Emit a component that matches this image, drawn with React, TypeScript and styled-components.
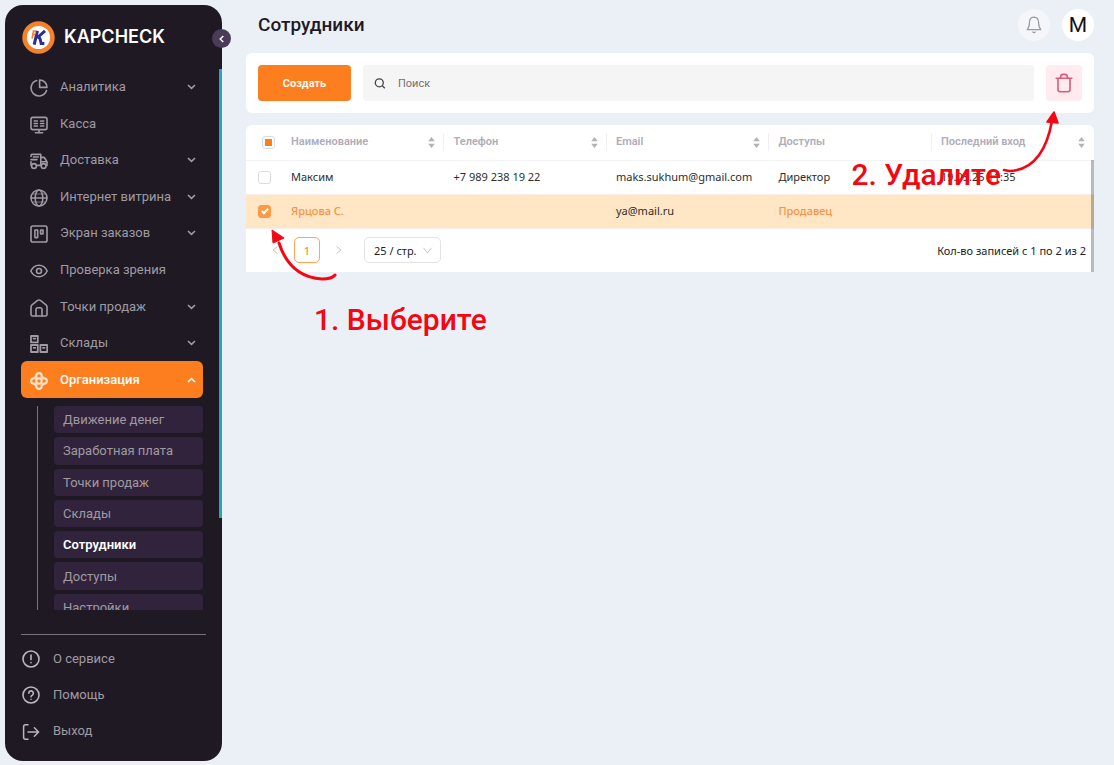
import React from 'react';
import styled, { createGlobalStyle, css } from 'styled-components';

const GlobalStyle = createGlobalStyle`
  *, *::before, *::after { box-sizing: border-box; }
  body { margin: 0; background: #ebf0f7; font-family: Roboto, sans-serif; color: #1f1924; }
  button, input, select { font-family: inherit; margin: 0; }
  button { cursor: pointer; border: 0; padding: 0; background: none; }
  ul { list-style: none; margin: 0; padding: 0; }
  a { text-decoration: none; color: inherit; }
`;

const uiFont = css`font-family: 'Noto Sans', 'Open Sans', sans-serif;`;

const Shell = styled.div`
  display: flex;
  min-height: 100vh;
  padding: 5px 20px 4px 5px;
  gap: 24px;
`;

/* ---------- sidebar ---------- */

const Sidebar = styled.aside`
  position: relative;
  display: flex;
  flex-direction: column;
  flex: 0 0 217px;
  height: calc(100vh - 9px);
  background: #1f1924;
  border-radius: 18px;
`;

const Brand = styled.a`
  display: flex;
  align-items: center;
  gap: 9px;
  height: 64px;
  padding-left: 17px;
  color: #fff;
  font: 600 18px/24px Inter, sans-serif;
`;

const CollapseButton = styled.button`
  position: absolute;
  top: 24px;
  right: -9px;
  width: 19px;
  height: 19px;
  border-radius: 50%;
  background: #4a3b57;
  color: #fff;
  display: grid;
  place-items: center;
`;

const NavScroll = styled.div`
  display: flex;
  flex: 1 1 0;
  min-height: 0;
  overflow: hidden;
`;

const Nav = styled.nav`
  flex: 1;
  padding: 0 16px;
`;

const ScrollTrack = styled.div`
  flex: 0 0 3px;
`;

const ScrollThumb = styled.div`
  height: 83%;
  background: #2ba3b8;
`;

const NavList = styled.ul`
  display: grid;
  grid-auto-rows: 1fr;
  height: 329px;
`;

const NavLink = styled.a<{ $active?: boolean }>`
  display: flex;
  align-items: center;
  height: 100%;
  padding: 0 7px 0 9px;
  border-radius: 6px;
  font-size: 13px;
  line-height: 18px;
  color: ${p => (p.$active ? '#fff' : '#9f9ba2')};
  font-weight: ${p => (p.$active ? 500 : 400)};
  background: ${p => (p.$active ? '#fd7e1f' : 'transparent')};
  & > svg:first-child { margin: 2px 12px 0 0; ${p => p.$active && 'color: #ffe3cc;'} }
  & > span { flex: 1; }
`;

const SubList = styled.ul`
  display: grid;
  grid-auto-rows: 1fr;
  gap: 4px;
  height: 215px;
  margin: 8px 0 0 16px;
  padding-left: 16px;
  border-left: 1px solid #77727b;
`;

const SubLink = styled.a<{ $active?: boolean }>`
  display: flex;
  align-items: center;
  height: 100%;
  padding-left: 9px;
  border-radius: 4px;
  background: #31233c;
  font-size: 13px;
  color: ${p => (p.$active ? '#fff' : '#9f9ba2')};
  font-weight: ${p => (p.$active ? 600 : 400)};
`;

const FooterNav = styled.nav`
  margin: 24px 16px 12px 16px;
  padding-top: 5px;
  border-top: 1px solid #77727b;
`;

const FooterList = styled.ul`
  display: grid;
  grid-auto-rows: 1fr;
  height: 109px;
`;

const FooterLink = styled.a`
  display: flex;
  align-items: center;
  gap: 13px;
  height: 100%;
  padding-left: 1px;
  font-size: 13px;
  color: #9f9ba2;
  & > svg { margin-top: 2px; color: #b9b7bc; }
`;

/* ---------- main ---------- */

const Main = styled.main`
  position: relative;
  flex: 1;
  min-width: 0;
  padding-top: 4px;
`;

const TopBar = styled.header`
  display: flex;
  align-items: center;
  gap: 12px;
  height: 32px;
  margin-bottom: 12px;
  padding-left: 12px;
`;

const Title = styled.h1`
  flex: 1;
  margin: 0;
  font-size: 19px;
  line-height: 24px;
  font-weight: 500;
`;

const RoundButton = styled.button<{ $solid?: boolean }>`
  display: grid;
  place-items: center;
  width: 32px;
  height: 32px;
  border-radius: 50%;
  background: ${p => (p.$solid ? '#fff' : '#f5f6f9')};
  color: ${p => (p.$solid ? '#111' : '#9a98a3')};
  font-size: 21px;
  line-height: 24px;
`;

const Toolbar = styled.section`
  display: flex;
  gap: 12px;
  padding: 12px;
  margin-bottom: 12px;
  background: #fff;
  border-radius: 6px;
`;

const CreateButton = styled.button`
  flex: 0 0 93px;
  height: 36px;
  border-radius: 4px;
  background: #fd7e1f;
  color: #fff;
  font-size: 11px;
  font-weight: 600;
`;

const SearchBox = styled.label`
  display: flex;
  align-items: center;
  flex: 1;
  gap: 12px;
  padding: 0 11px;
  border-radius: 4px;
  background: #f5f5f5;
  color: #444;
`;

const SearchInput = styled.input`
  flex: 1;
  min-width: 0;
  border: 0;
  outline: 0;
  padding: 0;
  background: transparent;
  font-size: 11px;
  &::placeholder { color: #707070; opacity: 1; }
`;

const DeleteButton = styled.button`
  display: grid;
  place-items: center;
  width: 36px;
  height: 36px;
  border-radius: 4px;
  background: #ffebf0;
  color: #dd5a78;
`;

const TableCard = styled.section`
  position: relative;
  background: #fff;
  border-radius: 6px 6px 0 0;
`;

const TableScrollbar = styled.div`
  position: absolute;
  top: 35px;
  right: 0;
  bottom: 0;
  width: 3px;
  background: rgba(0, 0, 0, 0.27);
`;

const Table = styled.table`
  width: 100%;
  table-layout: fixed;
  border-collapse: collapse;
`;

const HeadCell = styled.th<{ $check?: boolean; $last?: boolean }>`
  width: ${p => (p.$check ? '36px' : p.$last ? 'auto' : '19.16%')};
  height: 35px;
  padding: ${p => (p.$check ? '0 0 0 16px' : '0 9px')};
  border-bottom: 1px solid #f3f3f5;
  color: #b0adba;
  font-size: 11px;
  font-weight: 600;
  line-height: 16px;
  text-align: left;
`;

const HeadContent = styled.div<{ $divided?: boolean }>`
  display: flex;
  align-items: center;
  justify-content: space-between;
  height: 18px;
  margin-right: -9px;
  padding-right: 8px;
  border-right: 1px solid ${p => (p.$divided ? '#f0f0f2' : 'transparent')};
`;

const SortButton = styled.button`
  display: grid;
  color: #b3b3b7;
`;

const Row = styled.tr<{ $selected?: boolean }>`
  background: ${p => (p.$selected ? '#ffe6c5' : '#fff')};
`;

const Cell = styled.td<{ $check?: boolean; $accent?: boolean }>`
  ${uiFont}
  height: 34px;
  padding: ${p => (p.$check ? '0 0 0 12px' : '0 9px')};
  border-bottom: 1px solid #f7efe8;
  font-size: 11px;
  line-height: 16px;
  white-space: nowrap;
  color: ${p => (p.$accent ? '#fb9243' : '#2d2d2d')};
  font-weight: ${p => (p.$accent ? 500 : 400)};
`;

const Checkbox = styled.input`
  appearance: none;
  display: grid;
  place-items: center;
  width: 13px;
  height: 13px;
  margin: 0;
  border: 1px solid #dcdce0;
  border-radius: 3px;
  background: #fff;
  &:indeterminate::after {
    content: '';
    width: 7px;
    height: 7px;
    background: #fb7d1c;
  }
  &:checked {
    border-color: #fd9a48;
    background: #fd9a48;
  }
  &:checked::after {
    content: '';
    width: 4px;
    height: 7px;
    margin-bottom: 2px;
    border: solid #fff;
    border-width: 0 2px 2px 0;
    transform: rotate(45deg);
  }
`;

const Pagination = styled.footer`
  ${uiFont}
  display: flex;
  align-items: center;
  height: 43px;
  padding: 0 8px 0 22px;
  font-size: 11px;
  color: #222;
`;

const PageArrow = styled.button`
  display: grid;
  place-items: center;
  width: 14px;
  height: 26px;
  color: #c4c4c8;
`;

const PageNumber = styled.button`
  width: 26px;
  height: 26px;
  margin: 0 12px;
  border: 1px solid #fda35c;
  border-radius: 5px;
  color: #fb8f3e;
  font-size: 11px;
  font-weight: 500;
`;

const SizePicker = styled.label`
  display: grid;
  align-items: center;
  width: 77px;
  height: 26px;
  margin-left: 18px;
  & > * { grid-area: 1 / 1; }
  & > svg { justify-self: end; margin-right: 9px; color: #c4c4c8; pointer-events: none; }
`;

const SizeSelect = styled.select`
  appearance: none;
  width: 100%;
  height: 26px;
  padding: 0 0 0 9px;
  border: 1px solid #e3e3e6;
  border-radius: 5px;
  background: #fff;
  color: #222;
  font-size: 11px;
`;

const Total = styled.span`
  margin-left: auto;
`;

/* ---------- handwritten hints ---------- */

const Hint = styled.p<{ $side: 'left' | 'right' }>`
  position: absolute;
  margin: 0;
  color: #f40612;
  font: 500 30px/40px Roboto, sans-serif;
  white-space: nowrap;
  pointer-events: none;
  ${p => (p.$side === 'left' ? 'left: 68px; top: 295px;' : 'right: 93px; top: 150px;')}
`;

const HintArrow = styled.svg<{ $side: 'left' | 'right' }>`
  position: absolute;
  pointer-events: none;
  fill: none;
  stroke: #f40612;
  ${p => (p.$side === 'left' ? 'left: 24px; top: 224px;' : 'right: 32px; top: 100px;')}
`;

/* ---------- icons ---------- */

const Icon = ({ size = 18, sw = 1.6, children }: { size?: number; sw?: number; children: React.ReactNode }) => (
  <svg width={size} height={size} viewBox="0 0 18 18" fill="none" stroke="currentColor" strokeWidth={sw}
    strokeLinecap="round" strokeLinejoin="round" aria-hidden="true">{children}</svg>
);

const icons = {
  pie: <Icon><path d="M6.6 1.6A7.9 7.9 0 1 0 16.5 11.6" /><path d="M9.6 1A7.4 7.4 0 0 1 17 8.4H9.6Z" /></Icon>,
  till: <Icon><rect x="1" y="1.4" width="16" height="12.2" rx="1.8" /><path d="M9 13.8v2.8M5.4 16.8h7.2M4.2 5h3.2M4.2 7.5h3.2M4.2 10h3.2M10.6 5h3.2M10.6 7.5h3.2M10.6 10h3.2" /></Icon>,
  truck: <Icon><path d="M1 4.4V3.4Q1 2.4 2 2.4H10.8V13.4H7.4M3.4 5h5M1 7.6h6M1 9.8v3.4M10.8 5.4h2.8Q14.2 5.4 14.6 6L17 9.8V13.6M11 9.8h5.8" /><circle cx="4" cy="14" r="2.4" /><circle cx="13.6" cy="14" r="2.4" /></Icon>,
  globe: <Icon sw={1.5}><circle cx="9" cy="9" r="8" /><ellipse cx="9" cy="9" rx="3.8" ry="8" /><path d="M1 9h16" /><path d="M2.6 5h12.8M2.6 13h12.8" strokeWidth=".7" /></Icon>,
  board: <Icon><rect x="1" y="1" width="16" height="16" rx="1.8" /><rect x="4.9" y="5" width="2.8" height="7.6" rx=".3" /><rect x="10.6" y="5" width="2.4" height="4" rx=".3" /></Icon>,
  eye: <Icon><path d="M.8 9C4.6 1.4 13.4 1.4 17.2 9C13.4 16.6 4.6 16.6.8 9Z" /><circle cx="9" cy="9" r="2.5" /></Icon>,
  home: <Icon><path d="M1 8Q1 6.6 2 5.8L7.6 1.4Q9 .6 10.4 1.4L16 5.8Q17 6.6 17 8V15.4Q17 17 15.4 17H2.6Q1 17 1 15.4Z" /><path d="M6 17V10.6Q6 8.8 7.8 8.8h2.4Q12 8.8 12 10.6V17" /></Icon>,
  boxes: <Icon sw={1.8}><rect x="1" y="1" width="6.8" height="6.4" /><rect x="1" y="10" width="6.8" height="7" /><rect x="10.4" y="10" width="6.8" height="7" /><path d="M3.6 3.6h1.6M3.6 12.8h1.6M13 12.8h1.6" /></Icon>,
  org: <Icon sw={2.2}><path d="M6.4 4.2Q6 1.2 9 1.2Q12 1.2 11.6 4.2L13.8 6.4Q16.8 6 16.8 9Q16.8 12 13.8 11.6L11.6 13.8Q12 16.8 9 16.8Q6 16.8 6.4 13.8L4.2 11.6Q1.2 12 1.2 9Q1.2 6 4.2 6.4Z" /><rect x="6.4" y="6.4" width="5.2" height="5.2" rx="1.6" /></Icon>,
  info: <Icon><circle cx="9" cy="9" r="8" /><path d="M9 5v4.6M9 12.6v.2" /></Icon>,
  help: <Icon><circle cx="9" cy="9" r="8" /><path d="M6.8 7.2a2.3 2.3 0 1 1 3.6 1.9Q9 9.8 9 10.8M9 13.2v.1" /></Icon>,
  exit: <Icon sw={1.5}><path d="M6 1.8H3.6Q1.6 1.8 1.6 3.8v10.4q0 2 2 2H6M6 9h10.6M12.4 4.8L16.6 9L12.4 13.2" /></Icon>,
};

const Chevron = ({ up }: { up?: boolean }) => (
  <svg width="9" height="6" viewBox="0 0 9 6" fill="none" stroke="currentColor" strokeWidth="1.6" aria-hidden="true">
    <path d={up ? 'M1 5L4.5 1.6L8 5' : 'M1 1L4.5 4.4L8 1'} />
  </svg>
);

const Logo = () => (
  <svg width="33" height="33" viewBox="0 0 33 33" aria-hidden="true">
    <circle cx="16.5" cy="16.5" r="16.2" fill="#f5812a" />
    <circle cx="16.5" cy="16.5" r="11.6" fill="#fff" />
    <path d="M15.4 9.8L12.2 23.6M23 9.8L15 17M17 15.8Q18.4 18 19.2 22.4H22.4" fill="none" stroke="#2b2e96" strokeWidth="3" />
    <path d="M10 17.6L11.4 10H13.2Q14.4 13.4 11.2 14" fill="none" stroke="#f5812a" strokeWidth="1.5" />
  </svg>
);

const SortIcon = () => (
  <svg width="7" height="11" viewBox="0 0 7 11" fill="currentColor" aria-hidden="true">
    <path d="M3.5 0L6.8 4.2H.2ZM3.5 11L6.8 6.8H.2Z" />
  </svg>
);

/* ---------- data ---------- */

const navItems: { label: string; icon: keyof typeof icons; sub?: boolean; active?: boolean }[] = [
  { label: 'Аналитика', icon: 'pie', sub: true },
  { label: 'Касса', icon: 'till' },
  { label: 'Доставка', icon: 'truck', sub: true },
  { label: 'Интернет витрина', icon: 'globe', sub: true },
  { label: 'Экран заказов', icon: 'board', sub: true },
  { label: 'Проверка зрения', icon: 'eye' },
  { label: 'Точки продаж', icon: 'home', sub: true },
  { label: 'Склады', icon: 'boxes', sub: true },
  { label: 'Организация', icon: 'org', sub: true, active: true },
];

const subItems = ['Движение денег', 'Заработная плата', 'Точки продаж', 'Склады', 'Сотрудники', 'Доступы', 'Настройки'];

const footerItems: { label: string; icon: keyof typeof icons }[] = [
  { label: 'О сервисе', icon: 'info' },
  { label: 'Помощь', icon: 'help' },
  { label: 'Выход', icon: 'exit' },
];

const columns = [
  { label: 'Наименование', sortable: true },
  { label: 'Телефон', sortable: true },
  { label: 'Email', sortable: true },
  { label: 'Доступы', sortable: false },
  { label: 'Последний вход', sortable: true },
];

const employees = [
  { name: 'Максим', phone: '+7 989 238 19 22', email: 'maks.sukhum@gmail.com', role: 'Директор', last: '19.05.25 11:35', selected: false },
  { name: 'Ярцова С.', phone: '', email: 'ya@mail.ru', role: 'Продавец', last: '', selected: true },
];

export default function App() {
  return (
    <>
      <GlobalStyle />
      <Shell>
        <Sidebar>
          <Brand href="#"><Logo />KAPCHECK</Brand>
          <CollapseButton aria-label="Свернуть меню">
            <svg width="5" height="8" viewBox="0 0 5 8" fill="none" stroke="currentColor" strokeWidth="1.4"><path d="M4.3 1L1.2 4L4.3 7" /></svg>
          </CollapseButton>
          <NavScroll>
            <Nav>
              <NavList>
                {navItems.map(item => (
                  <li key={item.label}>
                    <NavLink href="#" $active={item.active}>
                      {icons[item.icon]}
                      <span>{item.label}</span>
                      {item.sub && <Chevron up={item.active} />}
                    </NavLink>
                  </li>
                ))}
              </NavList>
              <SubList>
                {subItems.map(label => (
                  <li key={label}><SubLink href="#" $active={label === 'Сотрудники'}>{label}</SubLink></li>
                ))}
              </SubList>
            </Nav>
            <ScrollTrack><ScrollThumb /></ScrollTrack>
          </NavScroll>
          <FooterNav>
            <FooterList>
              {footerItems.map(item => (
                <li key={item.label}><FooterLink href="#">{icons[item.icon]}{item.label}</FooterLink></li>
              ))}
            </FooterList>
          </FooterNav>
        </Sidebar>

        <Main>
          <TopBar>
            <Title>Сотрудники</Title>
            <RoundButton aria-label="Уведомления">
              <svg width="18" height="18" viewBox="0 0 18 18" fill="none" stroke="currentColor" strokeWidth="1.2" strokeLinecap="round" strokeLinejoin="round">
                <path d="M2.2 13.6Q4.4 11.4 4.4 6.6Q4.6 1.4 9 1.2Q13.4 1.4 13.6 6.6Q13.6 11.4 15.8 13.6ZM7.8 16L9 16.8L10.2 16" />
              </svg>
            </RoundButton>
            <RoundButton $solid aria-label="Профиль">M</RoundButton>
          </TopBar>

          <Toolbar>
            <CreateButton>Создать</CreateButton>
            <SearchBox>
              <svg width="12" height="12" viewBox="0 0 12 12" fill="none" stroke="currentColor" strokeWidth="1.3" aria-hidden="true"><circle cx="5.3" cy="5.8" r="4" /><path d="M8.3 8.8L10.8 11.2" /></svg>
              <SearchInput type="search" placeholder="Поиск" aria-label="Поиск" />
            </SearchBox>
            <DeleteButton aria-label="Удалить">
              <svg width="18" height="20" viewBox="0 0 18 20" fill="none" stroke="currentColor" strokeWidth="1.6" strokeLinecap="round" strokeLinejoin="round">
                <path d="M1.2 5.2H16.8M3 5.4V16.6Q3 18.8 5.2 18.8h7.6Q15 18.8 15 16.6V5.4M5.4 5Q5.6 1.4 8 1.4h2Q12.4 1.4 12.6 5" />
              </svg>
            </DeleteButton>
          </Toolbar>

          <TableCard>
            <Table>
              <thead>
                <tr>
                  <HeadCell $check>
                    <Checkbox type="checkbox" aria-label="Выбрать все" ref={el => { if (el) el.indeterminate = true; }} />
                  </HeadCell>
                  {columns.map((c, i) => (
                    <HeadCell key={c.label} $last={i === columns.length - 1}>
                      <HeadContent $divided={i < columns.length - 1}>
                        {c.label}
                        {c.sortable && <SortButton aria-label={`Сортировать: ${c.label}`}><SortIcon /></SortButton>}
                      </HeadContent>
                    </HeadCell>
                  ))}
                </tr>
              </thead>
              <tbody>
                {employees.map(e => (
                  <Row key={e.name} $selected={e.selected}>
                    <Cell $check><Checkbox type="checkbox" aria-label={e.name} defaultChecked={e.selected} /></Cell>
                    <Cell $accent={e.selected}>{e.name}</Cell>
                    <Cell>{e.phone}</Cell>
                    <Cell>{e.email}</Cell>
                    <Cell $accent={e.selected}>{e.role}</Cell>
                    <Cell>{e.last}</Cell>
                  </Row>
                ))}
              </tbody>
            </Table>
            <Pagination>
              <PageArrow aria-label="Назад"><svg width="6" height="8" viewBox="0 0 6 8" fill="none" stroke="currentColor"><path d="M5.5.5L1 4L5.5 7.5" /></svg></PageArrow>
              <PageNumber>1</PageNumber>
              <PageArrow aria-label="Вперёд"><svg width="6" height="8" viewBox="0 0 6 8" fill="none" stroke="currentColor"><path d="M.5.5L5 4L.5 7.5" /></svg></PageArrow>
              <SizePicker>
                <SizeSelect aria-label="Записей на странице"><option>25 / стр.</option></SizeSelect>
                <svg width="9" height="7" viewBox="0 0 9 7" fill="none" stroke="currentColor"><path d="M.5.8L4.5 6L8.5.8" /></svg>
              </SizePicker>
              <Total>Кол-во записей с 1 по 2 из 2</Total>
            </Pagination>
            <TableScrollbar />
          </TableCard>

          <Hint $side="left">1. Выберите</Hint>
          <HintArrow $side="left" width="68" height="54" viewBox="0 0 68 54">
            <path d="M9 14Q20 48 52 50Q62 50 65 46" strokeWidth="3" strokeLinecap="round" />
            <path d="M2 1L14 9L3 14Z" fill="#f40612" strokeLinejoin="round" />
          </HintArrow>
          <Hint $side="right">2. Удалите</Hint>
          <HintArrow $side="right" width="62" height="70" viewBox="0 0 62 70">
            <path d="M4 65L9 66Q43 65 52 16" strokeWidth="2.6" strokeLinecap="round" />
            <path d="M54 7L58 18L47 17Z" fill="#f40612" strokeLinejoin="round" strokeWidth="1.6" />
          </HintArrow>
        </Main>
      </Shell>
    </>
  );
}
